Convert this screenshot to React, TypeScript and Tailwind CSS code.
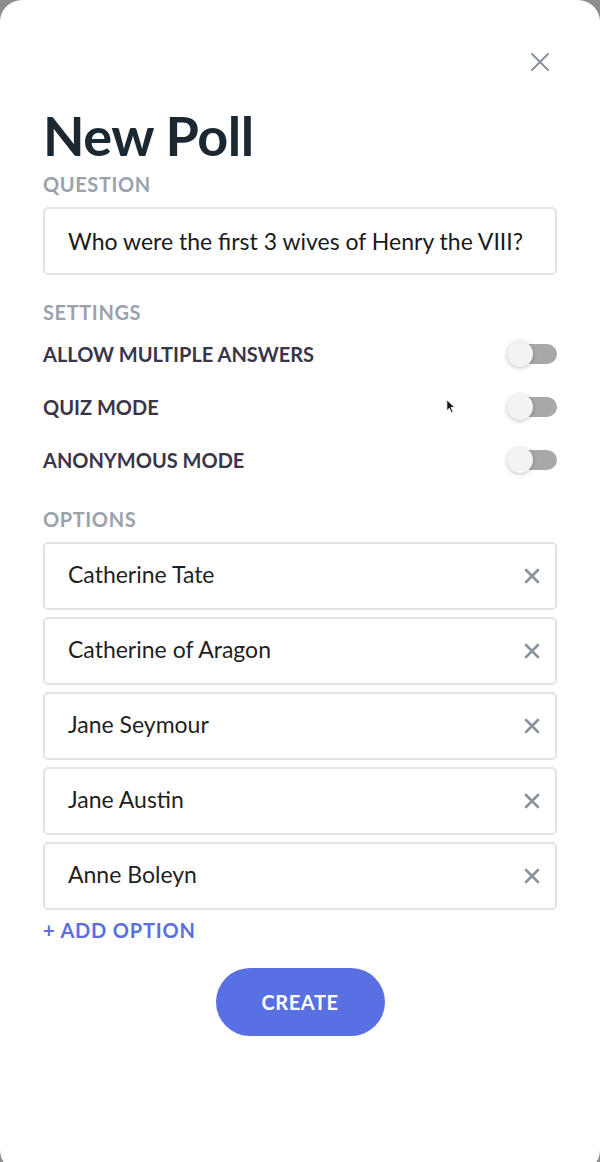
import React from 'react';

const font = { fontFamily: 'Lato, "Noto Sans", sans-serif' };

const CloseIcon: React.FC<{ className?: string }> = ({ className }) => (
  <svg viewBox="0 0 20 20" className={className} fill="none" stroke="currentColor">
    <path d="M2 2L18 18M18 2L2 18" strokeWidth="2" strokeLinecap="round" />
  </svg>
);

const Toggle: React.FC = () => (
  <div className="relative w-[54px] h-[28px] flex items-center">
    <div className="absolute right-0 left-[8px] h-[20px] rounded-full bg-[#a8a8a8]" />
    <div className="absolute left-[4px] w-[26px] h-[26px] rounded-full bg-[#f3f3f4] shadow-[0_1px_4px_rgba(0,0,0,0.25)]" />
  </div>
);

const Label: React.FC<{ children: React.ReactNode }> = ({ children }) => (
  <div className="text-[20px] font-bold tracking-[0.6px] text-[#9aa2ad] leading-[24px]">{children}</div>
);

const settings = ['ALLOW MULTIPLE ANSWERS', 'QUIZ MODE', 'ANONYMOUS MODE'];
const options = ['Catherine Tate', 'Catherine of Aragon', 'Jane Seymour', 'Jane Austin', 'Anne Boleyn'];

export default function App() {
  return (
    <div className="min-h-[1162px] bg-[#8d8d8d] overflow-hidden" style={font}>
      <div className="relative w-[600px] h-[1172px] bg-white rounded-[22px] px-[43px]">
        {/* close */}
        <div className="flex justify-end pt-[52px] pr-[7px]">
          <CloseIcon className="w-[20px] h-[20px] text-[#8b929b]" />
        </div>

        <h1 className="mt-[36px] text-[54px] font-bold text-[#1b2731] leading-[56px] tracking-[-0.5px]">New Poll</h1>

        <div className="mt-[8px]">
          <Label>QUESTION</Label>
        </div>
        <div className="mt-[11px] h-[68px] border-2 border-[#e3e3e6] rounded-[5px] flex items-center px-[23px]">
          <span className="text-[23px] text-[#1a1a1a]">Who were the first 3 wives of Henry the VIII?</span>
        </div>

        <div className="mt-[25px]">
          <Label>SETTINGS</Label>
        </div>
        <div className="mt-[3px] flex flex-col">
          {settings.map((s) => (
            <div key={s} className="h-[53px] flex items-center justify-between">
              <span className="text-[20px] font-bold text-[#3a3549]">{s}</span>
              <Toggle />
            </div>
          ))}
        </div>

        <div className="mt-[21px]">
          <Label>OPTIONS</Label>
        </div>
        <div className="mt-[11px] flex flex-col gap-[7px]">
          {options.map((o) => (
            <div key={o} className="h-[68px] border-2 border-[#e3e3e6] rounded-[5px] flex items-center justify-between pl-[23px] pr-[15px]">
              <span className="text-[23px] text-[#1f1f23] -mt-[3px]">{o}</span>
              <svg viewBox="0 0 16 16" className="w-[16px] h-[16px] text-[#8b929b]" fill="none" stroke="currentColor">
                <path d="M2 2L14 14M14 2L2 14" strokeWidth="2.6" strokeLinecap="round" />
              </svg>
            </div>
          ))}
        </div>

        <div className="mt-[5px] text-[20px] font-bold tracking-[0.8px] text-[#5a6ee0]">+ ADD OPTION</div>

        <div className="mt-[23px] flex justify-center">
          <button className="w-[169px] h-[68px] rounded-full bg-[#5870e4] text-white text-[20px] font-bold tracking-[0.6px]">
            CREATE
          </button>
        </div>

        {/* mouse cursor */}
        <svg viewBox="0 0 12 18" className="absolute left-[446px] top-[399px] w-[10px] h-[15px]">
          <path d="M1 1L1 14L4 11L6.5 16.5L8.5 15.5L6 10L10.5 10Z" fill="#111" stroke="#fff" strokeWidth="1" />
        </svg>
      </div>
    </div>
  );
}
